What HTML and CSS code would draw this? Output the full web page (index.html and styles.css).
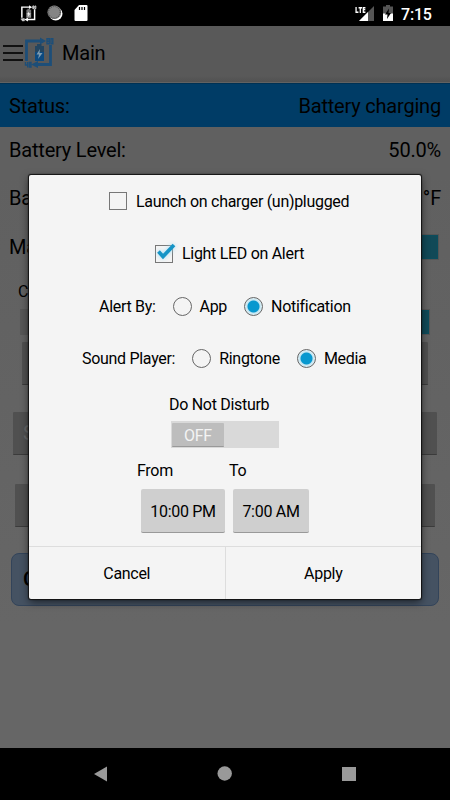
FILE: index.html
```html
<!DOCTYPE html>
<html lang="en">
<head>
    <meta charset="UTF-8">
    <meta name="viewport" content="width=device-width, initial-scale=1.0">
    <title>Main</title>
    <link rel="stylesheet" href="styles.css">
</head>
<body>
    <svg width="0" height="0" class="defs">
        <symbol id="logo" viewBox="0 0 30 32">
            <path d="M2.500 24V4H18M26.500 8v19.500H11" fill="none" stroke="currentColor" stroke-width="2.800"/>
            <path d="M16 .500l6 3.500-6 3.500zM14 24l-7 3.500 7 3.500z" fill="currentColor"/>
            <path d="M23 1.800h2.300v5H23zM23 4.200h2.300M27 1.800h1.800v5H27zM1.500 25v3H4M3.700 25v5.500M5.500 25.500h1.500v4.500H5.500z" fill="none" stroke="currentColor" stroke-width="1.400"/>
            <path class="cell-top" d="M13 7h4.500v2H20v7h-9V9h2z"/>
            <path class="cell" d="M11 15h9v9h-9z"/>
            <path class="bolt" d="M16 12l-3.500 5.500h2.500l-1 4.500 4.500-6H15.500z"/>
        </symbol>
    </svg>

    <div class="statusbar">
        <div class="status-left">
            <svg class="logo-small" width="17" height="17"><use href="#logo"/></svg>
            <svg width="17" height="17" viewBox="0 0 17 17">
                <circle cx="8.700" cy="8.700" r="6.800" fill="#fff"/>
                <circle cx="7.300" cy="7.300" r="6.800" fill="#858585"/>
                <circle cx="7.300" cy="7.300" r="6" fill="none" stroke="#555" stroke-width="1.500" stroke-dasharray="1 1"/>
            </svg>
            <svg width="14" height="16" viewBox="0 0 14 16">
                <path d="M5 0h7.500q1 0 1 1v14q0 1-1 1h-11q-1 0-1-1V5z" fill="#fff"/>
                <path d="M5.500 2v3M8 2v3M10.500 2v3" stroke="#000" stroke-width="1.200"/>
            </svg>
        </div>
        <div class="status-right">
            <span class="lte">LTE</span>
            <svg class="signal" width="15" height="15" viewBox="0 0 15 15">
                <path d="M15 0v15H0z" fill="#555"/>
                <path d="M9 6v9H0z" fill="#fff"/>
            </svg>
            <svg class="battery" width="10" height="16" viewBox="0 0 10 16">
                <path d="M3 0h4v1.500h3V9H0V1.500h3z" fill="#555"/>
                <path d="M0 8.500h10V16H0z" fill="#fff"/>
                <path d="M6 3.500L2 9.500h2.500L4 14l4-6H5.500z" fill="#000"/>
            </svg>
            <span class="clock">7:15</span>
        </div>
    </div>

    <div class="page">
        <div class="header">
            <div class="menu"><i></i><i></i><i></i></div>
            <svg class="logo" width="30" height="32"><use href="#logo"/></svg>
            <span>Main</span>
        </div>
        <div class="row active"><span>Status:</span><span>Battery charging</span></div>
        <div class="row level"><span>Battery Level:</span><span>50.0%</span></div>
        <div class="row temp"><span>Ba</span><span>°F</span></div>
        <div class="row max"><span>Ma</span><div class="switch on"></div></div>
        <div class="small-label">C</div>
        <div class="switches"><div class="switch off"></div><div class="switch on"></div></div>
        <div class="bar bar1"></div>
        <div class="bar bar2">S</div>
        <div class="bar bar3"></div>
        <div class="note">C</div>
    </div>

    <div class="navbar">
        <svg width="14" height="16" viewBox="0 0 14 16"><path d="M13 .500v15L0 8z"/></svg>
        <svg width="16" height="16" viewBox="0 0 16 16"><circle cx="7.700" cy="7.500" r="7.200"/></svg>
        <svg width="14" height="14" viewBox="0 0 14 14"><path d="M0 0h14v14H0z"/></svg>
    </div>

    <div class="dialog">
        <div class="content">
            <div class="option launch"><span class="checkbox"></span>Launch on charger (un)plugged</div>
            <div class="option led">
                <span class="checkbox">
                    <svg class="check" width="22" height="20" viewBox="0 0 22 20"><path d="M3.500 9.500l4.500 5L19 3" fill="none" stroke="#1594c6" stroke-width="3.700"/></svg>
                </span>Light LED on Alert
            </div>
            <div class="option alert">
                <span class="title">Alert By:</span>
                <span class="radio"></span><span class="choice">App</span>
                <span class="radio selected"></span><span class="choice">Notification</span>
            </div>
            <div class="option sound">
                <span class="title">Sound Player:</span>
                <span class="radio"></span><span class="choice">Ringtone</span>
                <span class="radio selected"></span><span class="choice">Media</span>
            </div>
            <div class="dnd">Do Not Disturb</div>
            <div class="dnd-switch"><span>OFF</span></div>
            <div class="times">
                <div class="time from"><span>From</span><button>10:00 PM</button></div>
                <div class="time to"><span>To</span><button>7:00 AM</button></div>
            </div>
        </div>
        <div class="actions">
            <button>Cancel</button>
            <button>Apply</button>
        </div>
    </div>
</body>
</html>
```
FILE: styles.css
```css
* {
    box-sizing: border-box;
}
body {
    width: 450px;
    height: 800px;
    margin: 0;
    overflow: hidden;
    display: flex;
    flex-direction: column;
    position: relative;
    font-family: Roboto, sans-serif;
    color: #000;
    background: #000;
}
svg {
    display: block;
    flex: none;
}
.defs {
    position: absolute;
}
button {
    font-family: inherit;
    letter-spacing: inherit;
    color: #000;
    border: none;
    padding: 0;
}

/* status bar */
.statusbar {
    height: 26px;
    flex: none;
    display: flex;
    justify-content: space-between;
    color: #fff;
}
.status-left {
    display: flex;
    align-items: center;
    gap: 10px;
    padding-left: 20px;
}
.status-left svg:last-child {
    margin-left: 0;
}
.logo-small {
    color: #fff;
    --cell: #999;
    --cell-top: #777;
    --bolt: #fff;
}
.cell {
    fill: var(--cell);
}
.cell-top {
    fill: var(--cell-top);
}
.bolt {
    fill: var(--bolt);
}
.status-right {
    display: flex;
    align-items: center;
    padding-right: 18px;
}
.lte {
    font-family: "Open Sans", sans-serif;
    font-size: 9.5px;
    font-weight: 800;
    line-height: 10px;
    width: 10px;
    margin: -7px -6px 0 0;
    transform: scaleX(.65);
    transform-origin: left;
    z-index: 1;
}
.signal {
    margin-top: 1px;
}
.battery {
    margin-left: 9px;
}
.clock {
    font-size: 16px;
    font-weight: 500;
    margin-left: 8px;
    width: 31px;
    margin-top: 2px;
    letter-spacing: -.2px;
}

/* dimmed page */
.page {
    height: 722px;
    flex: none;
    background: linear-gradient(#595959 0, #595959 50px, #606060 58px, #606060 150px, #666 600px);
    font-size: 20px;
    letter-spacing: -.2px;
}
.header {
    height: 57px;
    display: flex;
    align-items: center;
    padding: 0 0 3px 3px;
    border-bottom: 1px solid #626262;
    background: linear-gradient(#595959 50px, #505050 57px);
}
.menu {
    width: 20px;
    display: flex;
    flex-direction: column;
    gap: 5px;
}
.menu i {
    height: 2px;
    background: #111;
}
.logo {
    margin: 0 8px 0 1px;
    color: #1d4e78;
    --cell: #0c4a80;
    --cell-top: #234560;
    --bolt: #7f9baf;
}
.row {
    display: flex;
    justify-content: space-between;
    align-items: center;
    padding: 0 9px;
}
.active {
    height: 44px;
    background: #003c66;
    border-top: 1px solid #003153;
}
.level {
    height: 47px;
    padding-bottom: 2px;
}
.temp {
    height: 48px;
}
.max {
    height: 48px;
    padding: 2px 12px 0 9px;
}
.switch {
    width: 60px;
    height: 24px;
}
.switch.on {
    background: #114957;
    border: 1px solid #0b4d5d;
    box-shadow: 0 0 0 1px #555;
}
.switch.off {
    height: 26px;
    background: #575757;
}
.small-label {
    height: 38px;
    padding: 13px 0 0 18px;
    font-size: 16px;
    line-height: 18px;
}
.switches {
    height: 26px;
    display: flex;
    justify-content: space-between;
    align-items: center;
    padding: 2px 21px 0 20px;
}
.bar {
    height: 43px;
    background: #505050;
    border-bottom: 1px solid #3b3b3b;
    border-radius: 1px;
}
.bar1 {
    margin: 8px 22px 0;
}
.bar2 {
    margin: 27px 13px 0;
    padding-left: 10px;
    line-height: 43px;
    color: #666;
}
.bar3 {
    margin: 29px 15px 0;
}
.note {
    margin: 26px 11px 0;
    height: 53px;
    padding-left: 11px;
    line-height: 51px;
    font-size: 21px;
    font-weight: 500;
    background: #455262;
    border: 1px solid #33445a;
    border-radius: 8px;
}

/* navigation bar */
.navbar {
    flex: 1;
    display: flex;
    justify-content: space-between;
    align-items: center;
    padding: 0 94px;
    fill: #999;
}

/* dialog */
.dialog {
    position: absolute;
    left: 29px;
    top: 175px;
    width: 392px;
    height: 424px;
    display: flex;
    flex-direction: column;
    background: #f4f4f4;
    border-radius: 2px;
    box-shadow: 0 0 1px 1px #111, 0 3px 8px rgba(0, 0, 0, .6);
    font-size: 16px;
    letter-spacing: -.3px;
}
.content {
    height: 371px;
}
.option {
    height: 52.5px;
    display: flex;
    align-items: center;
}
.launch {
    padding-left: 80px;
}
.led {
    padding-left: 126px;
}
.alert {
    padding-left: 70px;
}
.sound {
    padding-left: 53px;
}
.checkbox {
    width: 18px;
    height: 18px;
    margin-right: 9px;
    border: 1px solid #777;
    position: relative;
}
.check {
    position: absolute;
    left: -1px;
    top: -4px;
    filter: drop-shadow(0 0 2px #9edcf4);
}
.title {
    margin-right: 17px;
}
.radio {
    width: 19px;
    height: 19px;
    margin-right: 8px;
    border: 1px solid #666;
    border-radius: 50%;
}
.selected {
    background: radial-gradient(circle, #0898cf 5.5px, #c4e6f2 6.5px, #e3f1f6 9px);
}
.choice {
    margin-right: 17px;
}
.dnd {
    height: 36px;
    padding-left: 140px;
    line-height: 40px;
}
.dnd-switch {
    width: 108px;
    height: 27px;
    margin-left: 142px;
    padding: 2px 1px;
    background: #d9d9d9;
}
.dnd-switch span {
    display: block;
    width: 52px;
    height: 24px;
    line-height: 25px;
    text-align: center;
    color: #f4f4f4;
    background: #bdbdbd;
    border-bottom: 1px solid #999;
    border-radius: 1px;
}
.times {
    display: flex;
    padding: 13px 0 0 108px;
}
.time {
    display: flex;
    flex-direction: column;
    line-height: 20px;
}
.from {
    width: 92px;
}
.time button {
    height: 44px;
    margin: 8px 0 0 4px;
    padding-top: 1px;
    font-size: 16px;
    background: #cfcfcf;
    border-bottom: 1px solid #999;
    border-radius: 2px;
}
.from button {
    width: 84px;
}
.to button {
    width: 76px;
}
.actions {
    height: 53px;
    display: flex;
    border-top: 1px solid #ddd;
}
.actions button {
    flex: 1;
    font-size: 16px;
    background: none;
}
.actions button:first-child {
    border-right: 1px solid #ddd;
}
```
